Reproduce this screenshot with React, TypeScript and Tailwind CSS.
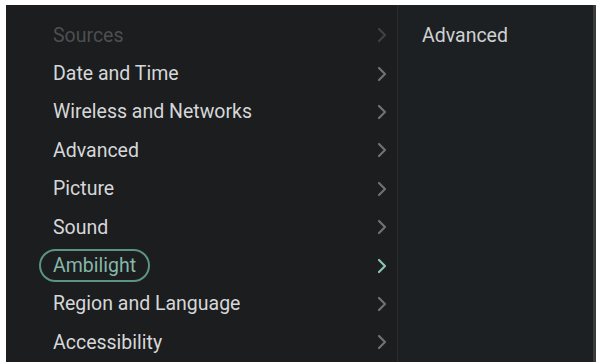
import { ChevronRight } from "lucide-react";

const items = [
  "Sources",
  "Date and Time",
  "Wireless and Networks",
  "Advanced",
  "Picture",
  "Sound",
  "Ambilight",
  "Region and Language",
  "Accessibility",
];

export default function App() {
  return (
    <div className="w-[601px] h-[362px] bg-white pt-[5px] pl-[6px] pr-[5px] overflow-hidden" style={{ fontFamily: "Roboto, 'Noto Sans', sans-serif" }}>
      <div className="flex h-full bg-[#1b1d1f] border-r-[3px] border-[#3a3c3e]">
        {/* Menu column */}
        <div className="w-[392px] pt-[11px] pl-[47px] pr-[3px] border-r border-[#2a2d30]">
          {items.map((label, i) => {
            const dim = i === 0;
            const active = label === "Ambilight";
            return (
              <div key={label} className="h-[38.4px] flex items-center justify-between">
                {active ? (
                  <span className="-ml-[14px] px-[12px] h-[33px] flex items-center rounded-full border-2 border-[#5b9484] text-[#86b8a8] text-[19.5px]">
                    {label}
                  </span>
                ) : (
                  <span className={`text-[19.5px] ${dim ? "text-[#4c4f52]" : "text-[#d6d7d8]"}`}>{label}</span>
                )}
                <ChevronRight
                  size={24}
                  strokeWidth={2.2}
                  className={active ? "text-[#8cc4b2]" : dim ? "text-[#3f4245]" : "text-[#6f7275]"}
                />
              </div>
            );
          })}
        </div>
        {/* Detail column */}
        <div className="flex-1 bg-[#1d2023] pt-[16px] pl-[24px]">
          <span className="text-[19.5px] text-[#d0d1d2]">Advanced</span>
        </div>
      </div>
    </div>
  );
}
